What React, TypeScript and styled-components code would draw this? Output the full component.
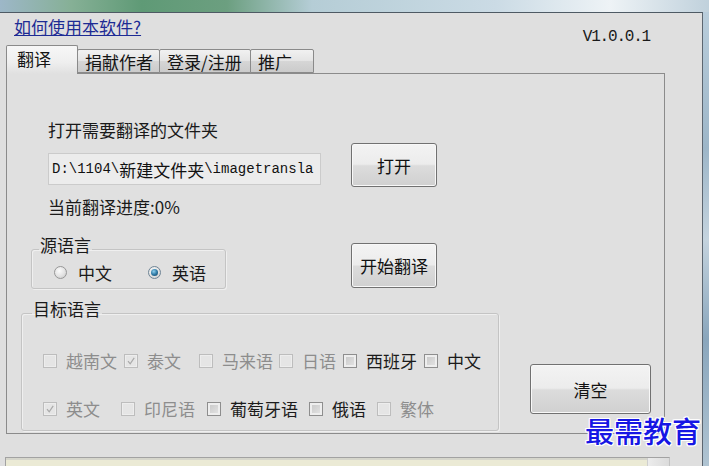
import React from "react";
import styled, { createGlobalStyle } from "styled-components";

const UI_FONT = `"Noto Sans CJK SC", "Noto Sans CJK TC", "Noto Sans", sans-serif`;

const GlobalStyle = createGlobalStyle`
  *, *::before, *::after { box-sizing: border-box; }
  html, body { margin: 0; padding: 0; }
  body {
    width: 709px;
    height: 466px;
    overflow: hidden;
    background: #c4d6e0;
    font-family: ${UI_FONT};
  }
`;

const Screen = styled.div`
  position: relative;
  width: 709px;
  height: 466px;
  display: flex;
  flex-direction: column;
  overflow: hidden;
  background: #c4d6e0;
`;

// blurred caption of the window, only a sliver of it shows
const TitleBar = styled.div`
  height: 12px;
  flex: 0 0 12px;
  background: linear-gradient(90deg, #9db7c8 0%, #86b096 10%, #5f9a76 20%, #6c9f80 32%, #b5cdd6 44%, #cbdbe5 70%, #eef3f6 86%, #c0d1dc 100%);
`;

const Desk = styled.div`
  flex: 1 1 auto;
  display: flex;
  min-height: 0;
`;

const Window = styled.div`
  width: 703px;
  flex: none;
  display: flex;
  flex-direction: column;
  background: #dfdfdf;
  border-top: 1px solid #4e5a64;
  border-right: 1px solid #5c6670;
`;

const Edge = styled.div`
  flex: 1 1 auto;
  background: linear-gradient(180deg, #b9cddb 0%, #9db6c8 30%, #c4d3de 50%, #8aa6bc 72%, #b0c4d2 100%);
`;

const Header = styled.div`
  height: 32px;
  flex: none;
  display: flex;
  justify-content: space-between;
  align-items: flex-start;
  padding: 4px 52px 0 14px;
`;

const HelpLink = styled.a`
  font-size: 17px;
  line-height: 20px;
  color: #1d2b94;
  text-decoration: underline;
  text-underline-offset: 1px;
  cursor: pointer;
`;

const Version = styled.span`
  margin-top: 10px;
  font-family: "Liberation Mono", monospace;
  font-size: 16px;
  line-height: 20px;
  letter-spacing: -1.2px;
  color: #1a1a1a;
`;

const TabStrip = styled.div`
  height: 28px;
  flex: none;
  display: flex;
  align-items: flex-end;
  padding-left: 6px;
  position: relative;
  z-index: 1;
`;

const Tab = styled.div<{ $w: number; $active?: boolean }>`
  width: ${(p) => p.$w}px;
  height: ${(p) => (p.$active ? 29 : 24)}px;
  margin-bottom: ${(p) => (p.$active ? -1 : 0)}px;
  margin-left: ${(p) => (p.$active ? 0 : -1)}px;
  display: flex;
  align-items: center;
  padding: ${(p) => (p.$active ? "0 0 3px 10px" : "0 0 0 7px")};
  font-size: 17px;
  color: #141414;
  border: 1px solid #8a8a8a;
  border-bottom: ${(p) => (p.$active ? "none" : "1px solid #8a8a8a")};
  border-radius: 2px 2px 0 0;
  background: ${(p) =>
    p.$active
      ? "linear-gradient(180deg, #f7f7f7 0%, #eeeeee 60%, #e0e0e0 100%)"
      : "linear-gradient(180deg, #f1f1f1 0%, #e4e4e4 50%, #d6d6d6 51%, #cbcbcb 100%)"};
`;

const Panel = styled.div`
  margin-left: 6px;
  width: 659px;
  height: 361px;
  flex: none;
  border: 1px solid #8b8b8b;
  background: #e0e0e0;
`;

const TopGrid = styled.div`
  display: grid;
  grid-template-columns: 320px 86px;
  padding: 46px 0 0 24px;
`;

const FieldLabel = styled.div<{ $top?: number }>`
  grid-column: 1;
  margin: ${(p) => p.$top ?? 0}px 0 0 17px;
  font-size: 17px;
  line-height: 20px;
  color: #1a1a1a;
`;

const PathInput = styled.div`
  grid-column: 1;
  align-self: end;
  margin: 0 0 2px 17px;
  width: 273px;
  height: 32px;
  display: flex;
  align-items: center;
  padding-left: 3px;
  overflow: hidden;
  white-space: nowrap;
  border: 1px solid #cbcbcb;
  background: #ececec;
  font-family: "Liberation Mono", monospace;
  font-size: 14px;
  color: #111;
`;

const WideGlyphs = styled.span`
  font-family: ${UI_FONT};
  font-size: 17px;
`;

const PushButton = styled.button<{ $w: number; $h: number }>`
  width: ${(p) => p.$w}px;
  height: ${(p) => p.$h}px;
  padding: 0;
  border: 1px solid #717171;
  border-radius: 3px;
  background: linear-gradient(180deg, #f3f3f3 0%, #ececec 48%, #dcdcdc 52%, #d0d0d0 100%);
  box-shadow: inset 0 0 0 1px #f8f8f8;
  font-family: ${UI_FONT};
  font-size: 17px;
  color: #111;
  cursor: pointer;
`;

const GridButton = styled(PushButton)<{ $top?: number; $bottom?: number }>`
  grid-column: 2;
  margin-top: ${(p) => p.$top ?? 0}px;
  margin-bottom: ${(p) => p.$bottom ?? 0}px;
  align-self: end;
`;

const GroupBox = styled.fieldset<{ $w: number }>`
  margin: 0;
  padding: 0;
  min-inline-size: 0;
  width: ${(p) => p.$w}px;
  border: 1px solid #c4c4c4;
  border-radius: 3px;
  box-shadow: inset 1px 1px 0 #efefef, 1px 1px 0 #efefef;
`;

const SourceGroup = styled(GroupBox)`
  grid-column: 1;
  margin-top: 18px;
`;

const GroupTitle = styled.legend<{ $indent: number }>`
  margin-left: ${(p) => p.$indent}px;
  padding: 0 1px 8px;
  font-size: 17px;
  line-height: 20px;
  color: #1a1a1a;
`;

const RadioRow = styled.div`
  display: flex;
  padding: 0 0 7px 22px;
  height: 25px;
`;

const RadioItem = styled.label<{ $w: number }>`
  width: ${(p) => p.$w}px;
  height: 18px;
  display: flex;
  align-items: center;
  gap: 11px;
  font-size: 17px;
  color: #1a1a1a;
`;

const RadioDot = styled.span<{ $checked?: boolean }>`
  width: 13px;
  height: 13px;
  flex: none;
  border-radius: 50%;
  border: 1px solid ${(p) => (p.$checked ? "#6f8596" : "#979797")};
  background: radial-gradient(circle at 40% 35%, #fbfbfb 0%, #e2e2e2 55%, #c4c4c4 100%);
  display: flex;
  align-items: center;
  justify-content: center;

  &::after {
    content: "";
    display: ${(p) => (p.$checked ? "block" : "none")};
    width: 7px;
    height: 7px;
    border-radius: 50%;
    background: radial-gradient(circle at 40% 35%, #8fd0ee 0%, #2f7aa6 50%, #14405e 100%);
  }
`;

const BottomRow = styled.div`
  display: flex;
  align-items: flex-start;
  margin-top: 10px;
  padding-left: 14px;
`;

const CheckRows = styled.div`
  display: flex;
  flex-direction: column;
  gap: 28px;
  padding: 24px 0 11px 21px;
`;

const CheckRow = styled.div`
  display: flex;
  height: 20px;
`;

const Option = styled.label<{ $w?: number; $enabled?: boolean }>`
  width: ${(p) => (p.$w ? `${p.$w}px` : "auto")};
  display: flex;
  align-items: center;
  gap: 9px;
  font-size: 17px;
  line-height: 20px;
  color: ${(p) => (p.$enabled ? "#1b1b1b" : "#8d8d8d")};
`;

const Box = styled.span<{ $enabled?: boolean }>`
  width: 14px;
  height: 14px;
  flex: none;
  display: flex;
  align-items: center;
  justify-content: center;
  border: 1px solid ${(p) => (p.$enabled ? "#8e8e8e" : "#bdbdbd")};
  background: ${(p) =>
    p.$enabled ? "linear-gradient(135deg, #c6c6c6 0%, #d9d9d9 60%, #e6e6e6 100%)" : "#e5e5e5"};
  box-shadow: ${(p) => (p.$enabled ? "inset 0 0 0 2px #eeeeee" : "inset 0 0 0 1px #ededed")};
`;

const ClearButton = styled(PushButton)`
  margin: 65px 0 0 31px;
`;

const Footer = styled.div`
  height: 23px;
  flex: none;
`;

const StatusBox = styled.div`
  flex: 1;
  display: flex;
  margin-left: 5px;
  width: 665px;
  border-top: 1px solid #a2a2a2;
  border-left: 1px solid #a2a2a2;
  border-right: 1px solid #c2c2c2;
`;

const StatusText = styled.div`
  flex: 1;
  background: #ebead5;
  border-top: 2px solid #d6d6cc;
`;

const StatusScroll = styled.div`
  width: 22px;
  background: linear-gradient(90deg, #ececec, #dbdbdb);
  border-left: 1px solid #cfcfcf;
`;

const Watermark = styled.div`
  position: absolute;
  left: 585px;
  top: 416px;
  font-family: ${UI_FONT};
  font-size: 29px;
  font-weight: 500;
  line-height: 1;
  color: #1616e4;
  text-shadow: 1px 0 #fff, -1px 0 #fff, 0 1px #fff, 0 -1px #fff, 1px 1px #fff, -1px -1px #fff,
    1px -1px #fff, -1px 1px #fff;
  pointer-events: none;
`;

function CheckMark() {
  return (
    <svg width="10" height="10" viewBox="0 0 10 10">
      <path d="M2 5.2 L4.2 7.8 L8.2 1.8" fill="none" stroke="#a9a9a9" strokeWidth="1.2" />
    </svg>
  );
}

type Lang = { name: string; w?: number; enabled?: boolean; checked?: boolean };

const rowOne: Lang[] = [
  { name: "越南文", w: 81 },
  { name: "泰文", w: 75, checked: true },
  { name: "马来语", w: 80 },
  { name: "日语", w: 64 },
  { name: "西班牙", w: 81, enabled: true },
  { name: "中文", enabled: true },
];

const rowTwo: Lang[] = [
  { name: "英文", w: 78, checked: true },
  { name: "印尼语", w: 86 },
  { name: "葡萄牙语", w: 102, enabled: true },
  { name: "俄语", w: 68, enabled: true },
  { name: "繁体" },
];

function LangRow({ items }: { items: Lang[] }) {
  return (
    <CheckRow>
      {items.map((l) => (
        <Option key={l.name} $w={l.w} $enabled={l.enabled}>
          <Box $enabled={l.enabled}>{l.checked && <CheckMark />}</Box>
          {l.name}
        </Option>
      ))}
    </CheckRow>
  );
}

export default function App() {
  return (
    <>
      <GlobalStyle />
      <Screen>
        <TitleBar />
        <Desk>
          <Window>
            <Header>
              <HelpLink>如何使用本软件?</HelpLink>
              <Version>V1.0.0.1</Version>
            </Header>
            <TabStrip>
              <Tab $w={72} $active>
                翻译
              </Tab>
              <Tab $w={83}>捐献作者</Tab>
              <Tab $w={92}>登录/注册</Tab>
              <Tab $w={64}>推广</Tab>
            </TabStrip>
            <Panel>
              <TopGrid>
                <FieldLabel>打开需要翻译的文件夹</FieldLabel>
                <PathInput>
                  D:\1104\<WideGlyphs>新建文件夹</WideGlyphs>\imagetransla
                </PathInput>
                <GridButton $w={86} $h={44} $top={3}>
                  打开
                </GridButton>
                <FieldLabel $top={10}>当前翻译进度:0%</FieldLabel>
                <SourceGroup $w={195}>
                  <GroupTitle $indent={7}>源语言</GroupTitle>
                  <RadioRow>
                    <RadioItem $w={94}>
                      <RadioDot />
                      中文
                    </RadioItem>
                    <RadioItem $w={70}>
                      <RadioDot $checked />
                      英语
                    </RadioItem>
                  </RadioRow>
                </SourceGroup>
                <GridButton $w={86} $h={45} $bottom={1}>
                  开始翻译
                </GridButton>
              </TopGrid>
              <BottomRow>
                <GroupBox $w={478}>
                  <GroupTitle $indent={10}>目标语言</GroupTitle>
                  <CheckRows>
                    <LangRow items={rowOne} />
                    <LangRow items={rowTwo} />
                  </CheckRows>
                </GroupBox>
                <ClearButton $w={121} $h={50}>
                  清空
                </ClearButton>
              </BottomRow>
            </Panel>
            <Footer />
            <StatusBox>
              <StatusText />
              <StatusScroll />
            </StatusBox>
          </Window>
          <Edge />
        </Desk>
        <Watermark>最需教育</Watermark>
      </Screen>
    </>
  );
}
